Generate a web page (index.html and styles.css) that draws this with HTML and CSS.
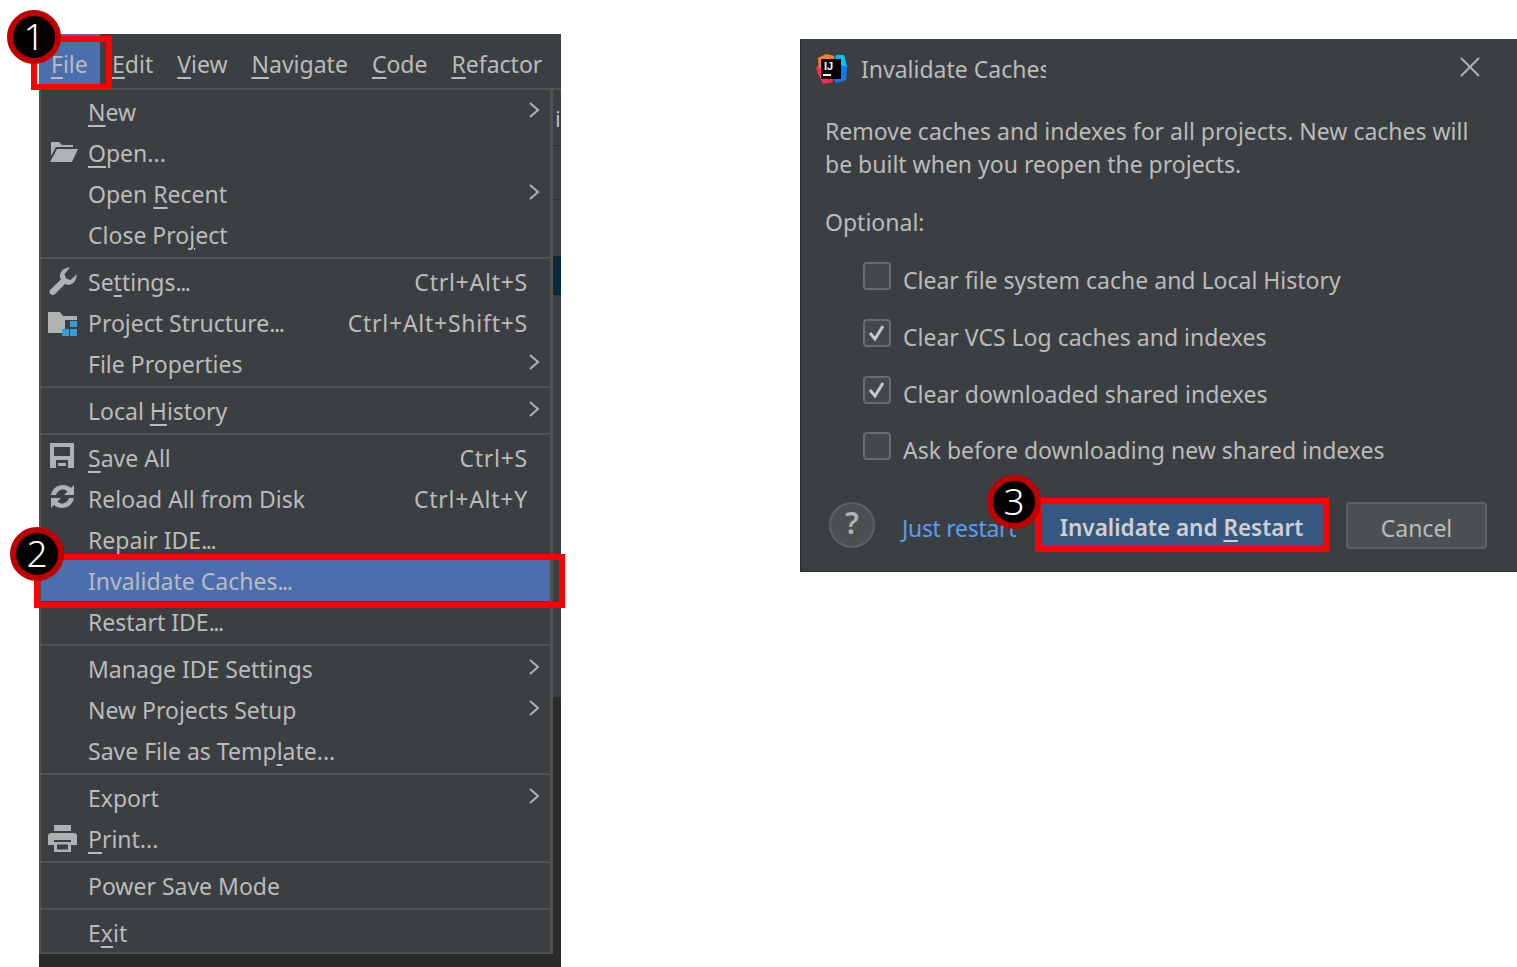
FILE: index.html
```html
<!DOCTYPE html>
<html lang="en">
<head>
  <meta charset="UTF-8">
  <meta name="viewport" content="width=device-width, initial-scale=1.0">
  <title>Invalidate Caches</title>
  <link rel="stylesheet" href="styles.css">
</head>
<body>
  <section class="ide-window">
    <nav class="menubar">
      <span class="menubar-item active"><u>F</u>ile</span>
      <span class="menubar-item"><u>E</u>dit</span>
      <span class="menubar-item"><u>V</u>iew</span>
      <span class="menubar-item"><u>N</u>avigate</span>
      <span class="menubar-item"><u>C</u>ode</span>
      <span class="menubar-item"><u>R</u>efactor</span>
    </nav>
    <div class="menu-wrap">
      <div class="menu">
        <div class="row"><span class="label"><u>N</u>ew</span><svg class="arrow" viewBox="0 0 11 16"><path d="M1 1l8 7-8 7"/></svg></div>
        <div class="row">
          <svg class="row-icon icon-open" viewBox="0 0 28 20"><path d="M1 0h8l3 3h11v2H6L1 14z"/><path d="M7 7h21l-6 13H0z"/></svg>
          <span class="label"><u>O</u>pen...</span>
        </div>
        <div class="row"><span class="label">Open <u>R</u>ecent</span><svg class="arrow" viewBox="0 0 11 16"><path d="M1 1l8 7-8 7"/></svg></div>
        <div class="row"><span class="label">Close Pro<u>j</u>ect</span></div>
        <div class="sep"></div>
        <div class="row">
          <svg class="row-icon icon-settings" viewBox="0 0 28 28"><path d="M21 .5C16 0 11 4 11 9c0 1.500.3 2.500.8 3.500L1.500 22.500c-1.500 1.500-1.500 3 0 4.500s3 1.500 4.500 0L16 17c1 .5 2 .8 3.500.8C24 17.800 28 13 27.500 7.500L21.500 13 17 11.500 15.500 7z"/></svg>
          <span class="label">Se<u>t</u>tings<span class="dots">...</span></span><span class="keys">Ctrl+Alt+S</span>
        </div>
        <div class="row">
          <svg class="row-icon icon-project" viewBox="0 0 29 24"><path d="M0 0h12l3 4h14v4H17v13H0z"/><path class="blue" d="M22 9h7v6h-7zM14 17h7v7h-7zM22 17h7v7h-7z"/></svg>
          <span class="label">Project Structure<span class="dots">...</span></span><span class="keys">Ctrl+Alt+Shift+S</span>
        </div>
        <div class="row"><span class="label">File Properties</span><svg class="arrow" viewBox="0 0 11 16"><path d="M1 1l8 7-8 7"/></svg></div>
        <div class="sep"></div>
        <div class="row"><span class="label">Local <u>H</u>istory</span><svg class="arrow" viewBox="0 0 11 16"><path d="M1 1l8 7-8 7"/></svg></div>
        <div class="sep"></div>
        <div class="row">
          <svg class="row-icon icon-save" viewBox="0 0 24 25"><path fill-rule="evenodd" d="M0 0h24v25H0zM4 4v9h16V4zM6 17v8h12v-8z"/><path d="M8 20h8v3H8z"/></svg>
          <span class="label"><u>S</u>ave All</span><span class="keys">Ctrl+S</span>
        </div>
        <div class="row">
          <svg class="row-icon icon-reload" viewBox="0 0 25 23"><path d="M1 10C2 4 7 0 13 0c3 0 6 1 8 3l3-3v10h-10l3.500-3.500C16 5 14.500 4.500 13 4.500c-3.500 0-6 2.500-7 5.500z"/><path d="M24 13c-1 6-6 10-12 10-3 0-6-1-8-3l-3 3V13h10l-3.500 3.500c1.500 1.500 3 2 4.500 2 3.500 0 6-2.500 7-5.500z"/></svg>
          <span class="label">Reload All from Disk</span><span class="keys">Ctrl+Alt+Y</span>
        </div>
        <div class="row"><span class="label">Repair IDE<span class="dots">...</span></span></div>
        <div class="row selected"><span class="label">Invalidate Caches<span class="dots">...</span></span></div>
        <div class="row"><span class="label">Restart IDE<span class="dots">...</span></span></div>
        <div class="sep"></div>
        <div class="row"><span class="label">Manage IDE Settings</span><svg class="arrow" viewBox="0 0 11 16"><path d="M1 1l8 7-8 7"/></svg></div>
        <div class="row"><span class="label">New Projects Setup</span><svg class="arrow" viewBox="0 0 11 16"><path d="M1 1l8 7-8 7"/></svg></div>
        <div class="row"><span class="label">Save File as Temp<u>l</u>ate...</span></div>
        <div class="sep"></div>
        <div class="row"><span class="label">Export</span><svg class="arrow" viewBox="0 0 11 16"><path d="M1 1l8 7-8 7"/></svg></div>
        <div class="row">
          <svg class="row-icon icon-print" viewBox="0 0 29 27"><path d="M6 0h17v6H6z"/><path d="M3 8h23a3 3 0 0 1 3 3v9h-6v-5H6v5H0v-9a3 3 0 0 1 3-3z"/><path fill-rule="evenodd" d="M6 17h17v10H6zM9 19.500v5h11v-5z"/></svg>
          <span class="label"><u>P</u>rint...</span>
        </div>
        <div class="sep"></div>
        <div class="row"><span class="label">Power Save Mode</span></div>
        <div class="sep"></div>
        <div class="row"><span class="label">E<u>x</u>it</span></div>
      </div>
      <div class="behind">
        <span class="behind-letter">i</span>
        <span class="behind-line first"></span>
        <span class="behind-line"></span>
        <span class="behind-tab"></span>
        <span class="behind-dark"></span>
      </div>
    </div>
    <div class="menu-foot"></div>
  </section>

  <section class="dialog">
    <header class="dialog-title">
      <svg class="app-logo" viewBox="0 0 32 30">
        <path d="M0 14l5-7 9 2 3 19-10 2-4-8z" fill="#fe2857"/>
        <path d="M2 4l8-4 9 2-4 7-12 6z" fill="#fc801d"/>
        <path d="M18 2l10-1 3 13-1 12-10 3-4-7z" fill="#087cfa"/>
        <path d="M20 1l8 0 3 12-9-3z" fill="#07c3f2"/>
        <rect x="5" y="5" width="20" height="20" fill="#000"/>
        <rect x="7" y="20" width="8" height="2" fill="#fff"/>
        <text class="logo-text" x="8" y="16">IJ</text>
      </svg>
      <span class="title-text">Invalidate Caches</span>
      <svg class="close-icon" viewBox="0 0 22 22"><path d="M2 2l18 18M20 2L2 20"/></svg>
    </header>
    <p class="dialog-text">Remove caches and indexes for all projects. New caches will<br>be built when you reopen the projects.</p>
    <p class="optional">Optional:</p>
    <ul class="checks">
      <li class="check-row"><span class="box"></span>Clear file system cache and Local History</li>
      <li class="check-row"><span class="box"><svg viewBox="0 0 24 24"><path d="M5 12l5 6 8-13"/></svg></span>Clear VCS Log caches and indexes</li>
      <li class="check-row"><span class="box"><svg viewBox="0 0 24 24"><path d="M5 12l5 6 8-13"/></svg></span>Clear downloaded shared indexes</li>
      <li class="check-row"><span class="box"></span>Ask before downloading new shared indexes</li>
    </ul>
    <footer class="dialog-foot">
      <span class="help">?</span>
      <a class="link">Just restart</a>
      <button class="btn primary">Invalidate and <u>R</u>estart</button>
      <button class="btn">Cancel</button>
    </footer>
  </section>

  <div class="mark mark-file"></div>
  <div class="mark mark-item"></div>
  <div class="mark mark-btn"></div>
  <span class="badge badge-1">1</span>
  <span class="badge badge-2">2</span>
  <span class="badge badge-3">3</span>
</body>
</html>
```

FILE: styles.css
```css
html, body {
  margin: 0;
  height: 967px;
  overflow: hidden;
  background: #fff;
  font-family: "Noto Sans", "Open Sans", sans-serif;
  color: #bbb;
}

u {
  text-underline-offset: 4px;
  text-decoration-thickness: 2px;
}

/* the two pasted screenshots */
.ide-window {
  position: absolute;
  left: 39px;
  top: 34px;
  width: 522px;
  height: 933px;
  background: #3c3f41;
  display: flex;
  flex-direction: column;
  font-size: 23px;
}

.dialog {
  position: absolute;
  left: 800px;
  top: 39px;
  width: 717px;
  height: 533px;
  background: #3c3f41;
  box-sizing: border-box;
  border-left: 1px solid #2b2b2b;
  border-bottom: 1px solid #2b2b2b;
  font-size: 23px;
}

/* menu */
.menubar {
  height: 54px;
  display: flex;
  align-items: flex-start;
  border-bottom: 2px solid #515151;
  flex: none;
}

.menubar-item {
  padding: 11px 12px 0;
  height: 50px;
  box-sizing: border-box;
  line-height: 38px;
}

.menubar-item.active {
  background: #4b6eaf;
  width: 61px;
  padding-left: 12px;
}

.menu-wrap {
  flex: 1;
  display: flex;
  min-height: 0;
}

.menu {
  width: 514px;
  box-sizing: border-box;
  border-left: 2px solid #515151;
  border-right: 3px solid #515151;
  border-bottom: 2px solid #515151;
  padding-top: .5px;
  flex: none;
}

.row {
  height: 41px;
  display: flex;
  align-items: center;
  position: relative;
  padding-left: 47px;
  padding-right: 22px;
  white-space: nowrap;
}

.row.selected {
  background: #4b6eaf;
}

.label {
  flex: 1;
  padding-top: 2px;
}

.dots {
  letter-spacing: -1.500px;
}

.keys {
  flex: none;
  padding-top: 2px;
  letter-spacing: .75px;
}

.row-icon {
  position: absolute;
  fill: #afb1b3;
}

.row-icon .blue {
  fill: #3d9ad1;
}

.icon-open {
  left: 9px;
  top: 10.500px;
  width: 28px;
  height: 20px;
}

.icon-settings {
  left: 8px;
  top: 6.500px;
  width: 28px;
  height: 28px;
}

.icon-project {
  left: 7px;
  top: 10.500px;
  width: 29px;
  height: 24px;
}

.icon-save {
  left: 9px;
  top: 6.500px;
  width: 24px;
  height: 25px;
}

.icon-reload {
  left: 9px;
  top: 7.500px;
  width: 25px;
  height: 23px;
}

.icon-print {
  left: 7px;
  top: 7.500px;
  width: 29px;
  height: 27px;
}

.arrow {
  position: absolute;
  right: 10px;
  top: 11px;
  width: 11px;
  height: 16px;
  fill: none;
  stroke: #afb1b3;
  stroke-width: 2;
}

.sep {
  height: 6px;
  display: flex;
  align-items: center;
}

.sep::before {
  content: "";
  flex: 1;
  height: 2px;
  background: #515151;
}

.menu-foot {
  height: 13px;
  flex: none;
  background: #2b2b2b;
}

/* what shows behind the open menu */
.behind {
  flex: 1;
  position: relative;
  overflow: hidden;
}

.behind-letter {
  position: absolute;
  left: 2px;
  top: 13px;
  font-size: 22px;
}

.behind-line {
  position: absolute;
  left: 0;
  right: 0;
  top: 109px;
  height: 1px;
  background: #2f3133;
}

.behind-line.first {
  top: 55px;
}

.behind-tab {
  position: absolute;
  left: 0;
  right: 0;
  top: 166px;
  height: 39px;
  background: #0d293e;
}

.behind-dark {
  position: absolute;
  left: 0;
  right: 0;
  top: 607px;
  bottom: 0;
  background: #2b2b2b;
}

/* dialog */
.dialog-title {
  height: 60px;
  display: flex;
  align-items: center;
  position: relative;
  padding-left: 15px;
}

.app-logo {
  width: 32px;
  height: 30px;
  flex: none;
}

.logo-text {
  font-family: "Liberation Sans", sans-serif;
  font-size: 11px;
  font-weight: 700;
  fill: #fff;
}

.title-text {
  margin-left: 13px;
  width: 185px;
  overflow: hidden;
  white-space: nowrap;
}

.close-icon {
  position: absolute;
  right: 36px;
  top: 17px;
  width: 22px;
  height: 22px;
  fill: none;
  stroke: #afb1b3;
  stroke-width: 2;
}

.dialog-text {
  margin: 16px 0 0 24px;
  line-height: 33px;
}

.optional {
  margin: 25px 0 0 24px;
  line-height: 33px;
}

.checks {
  list-style: none;
  margin: 13px 0 0 62px;
  padding: 0;
}

.check-row {
  height: 56.700px;
  display: flex;
  align-items: center;
  gap: 12px;
}

.box {
  width: 28px;
  height: 28px;
  box-sizing: border-box;
  border: 2px solid #6b6b6b;
  border-radius: 4px;
  background: #43494a;
  margin-top: -8px;
  flex: none;
}

.box svg {
  display: block;
  width: 24px;
  height: 24px;
  fill: none;
  stroke: #c8c8c8;
  stroke-width: 3;
}

.dialog-foot {
  position: absolute;
  left: 28px;
  right: 29px;
  top: 462px;
  height: 48px;
  display: flex;
  align-items: center;
}

.help {
  width: 46px;
  height: 46px;
  box-sizing: border-box;
  border: 2px solid #5e6060;
  border-radius: 50%;
  background: #4c5052;
  text-align: center;
  font-size: 30px;
  font-weight: 600;
  line-height: 38px;
  color: #afb1b3;
}

.link {
  margin-left: 27px;
  padding-top: 5px;
  color: #589df6;
  width: 138px;
  letter-spacing: -.3px;
  white-space: nowrap;
}

.btn {
  font: inherit;
  color: #bbb;
  height: 47px;
  width: 141px;
  padding: 5px 0 0;
  background: #4c5052;
  border: 2px solid #5e6060;
  border-radius: 4px;
}

.btn.primary {
  width: 283px;
  height: 44px;
  margin-right: 23px;
  background: #365880;
  border: 0;
  border-radius: 0;
  font-size: 22.500px;
  font-weight: 600;
  color: #d0d0d0;
}

/* annotations drawn on top */
.mark {
  position: absolute;
  box-sizing: border-box;
  border: 6px solid #f00;
}

.mark-file {
  left: 31px;
  top: 36px;
  width: 81px;
  height: 54px;
}

.mark-item {
  left: 34px;
  top: 554px;
  width: 531px;
  height: 54px;
}

.mark-btn {
  left: 1035px;
  top: 498px;
  width: 294px;
  height: 54px;
}

.badge {
  position: absolute;
  width: 54px;
  height: 54px;
  box-sizing: border-box;
  border: 6px solid #c00000;
  border-radius: 50%;
  background: #000;
  color: #fff;
  font-size: 37px;
  font-weight: 300;
  line-height: 40px;
  text-align: center;
}

.badge-1 {
  left: 7px;
  top: 10px;
}

.badge-2 {
  left: 10px;
  top: 527px;
}

.badge-3 {
  left: 987px;
  top: 475px;
}
```
